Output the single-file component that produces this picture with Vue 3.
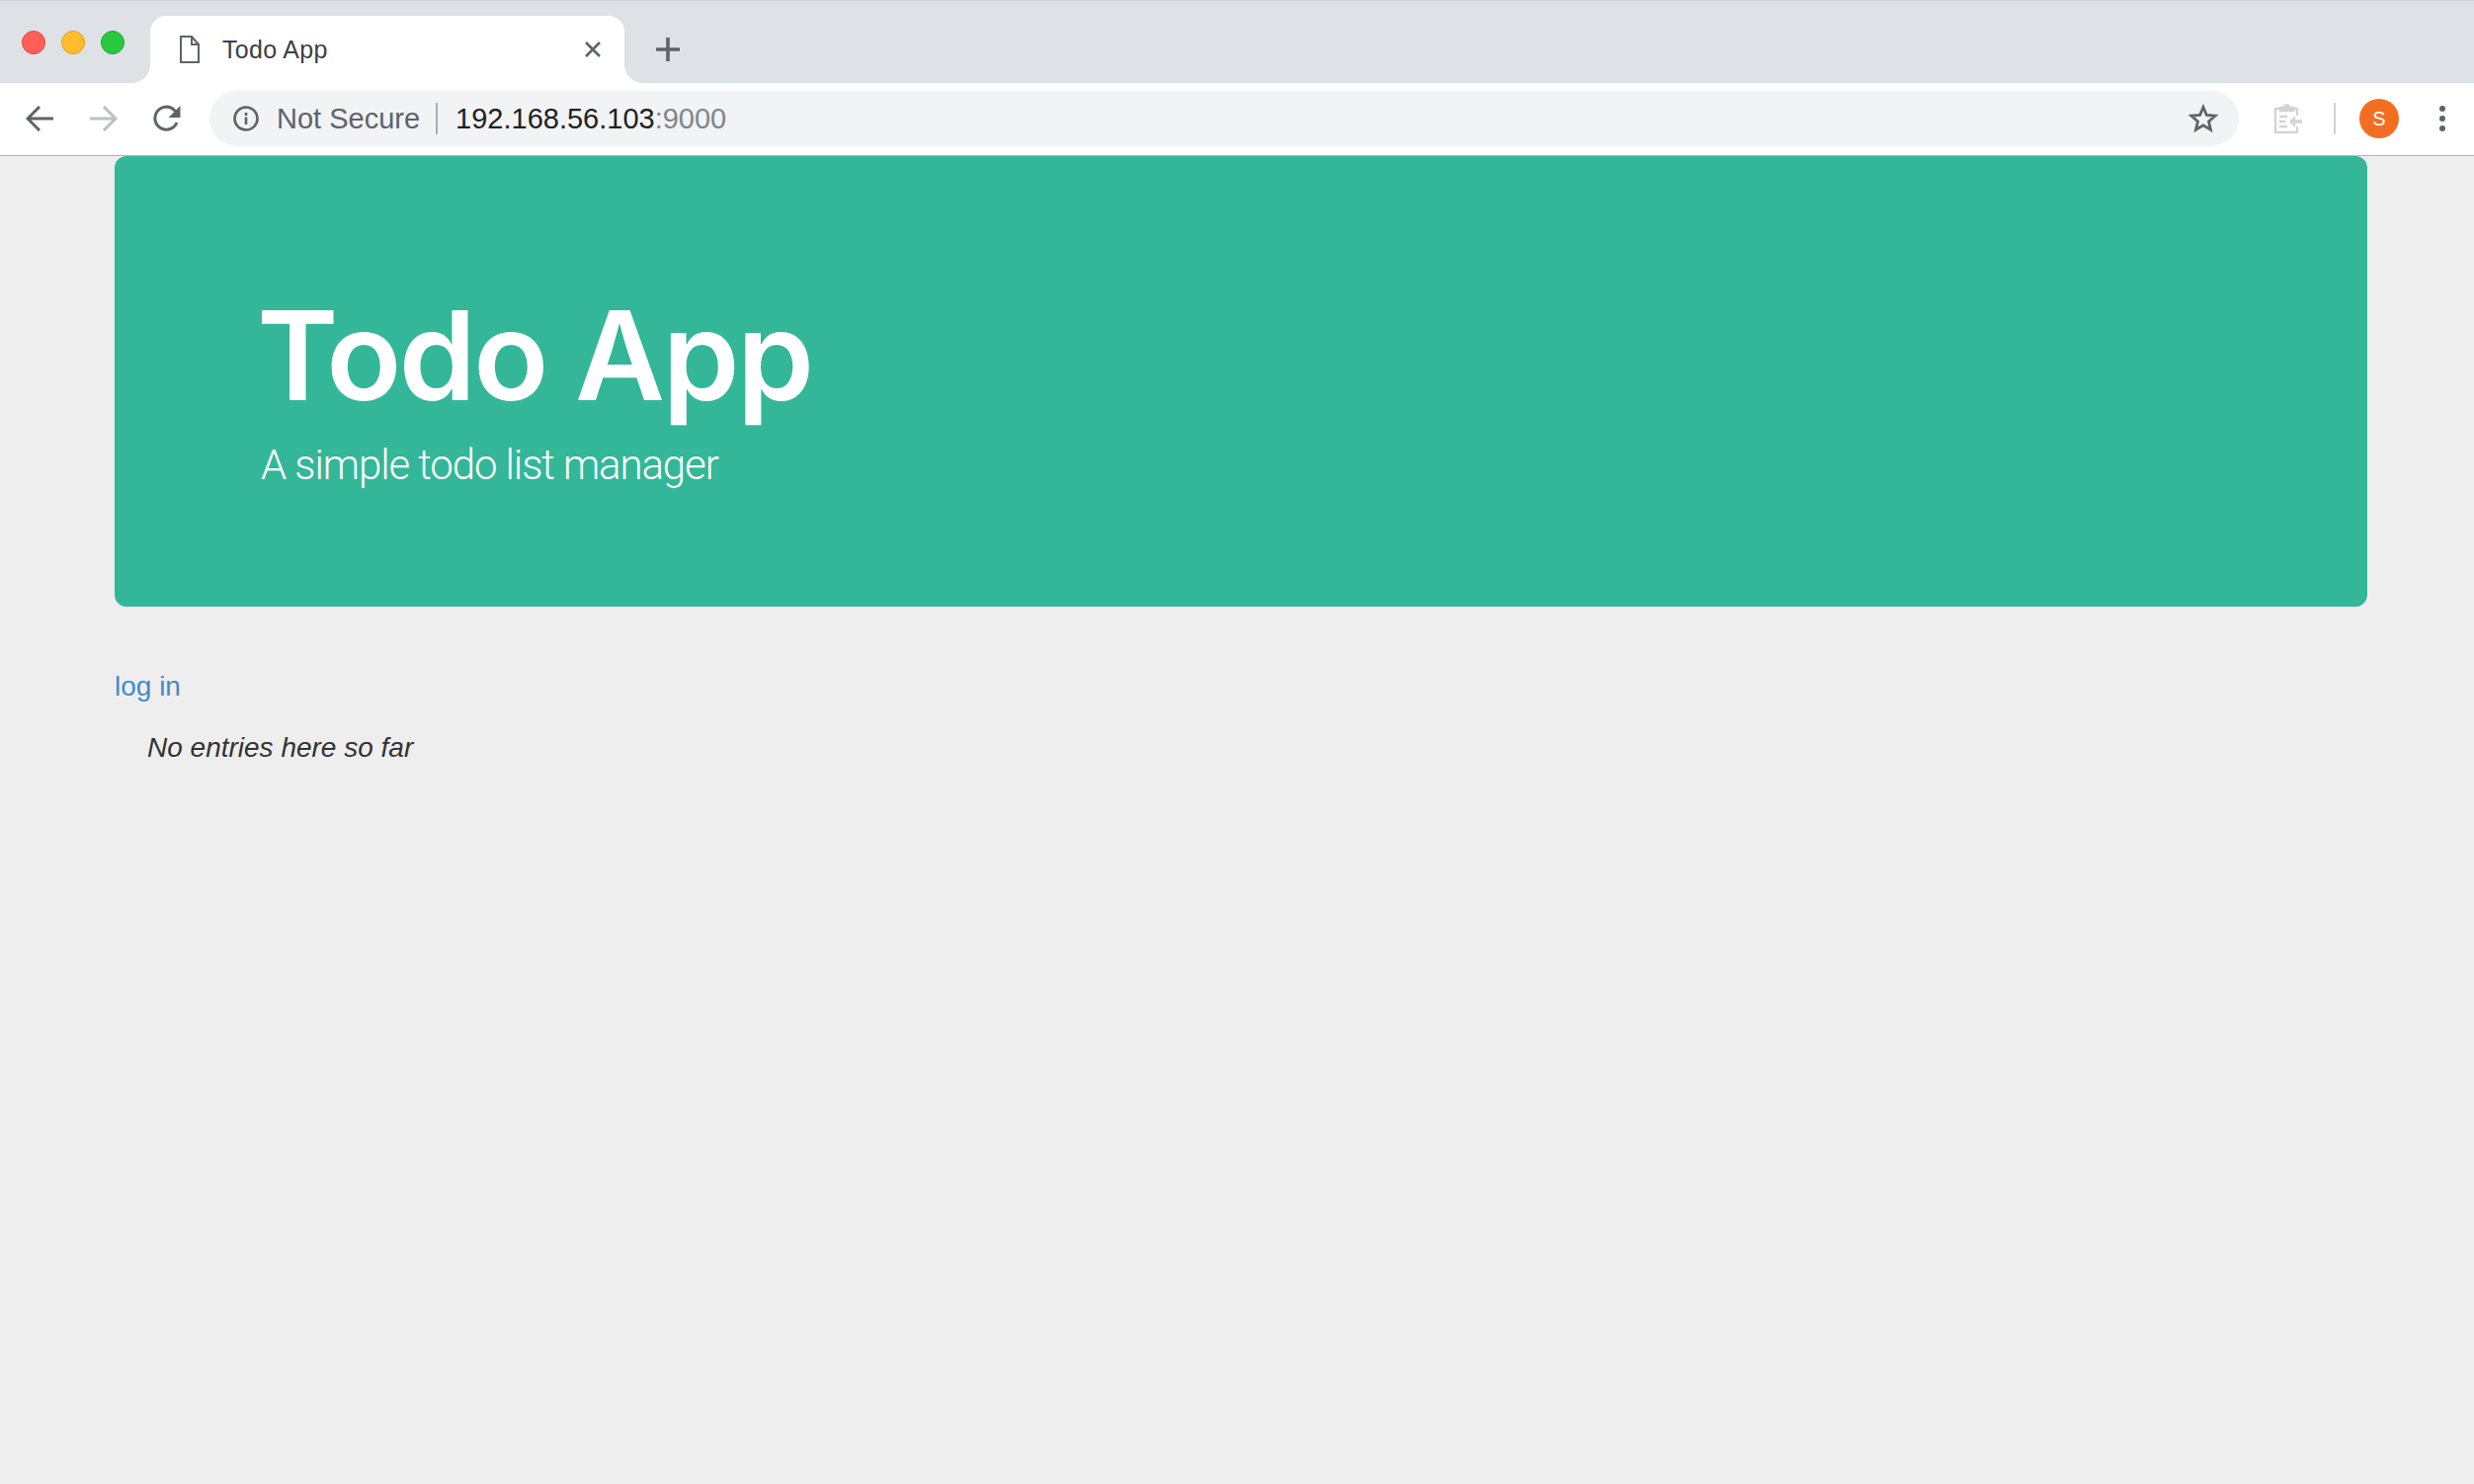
<template>
  <div class="window">
    <!-- tab strip -->
    <div class="tabstrip">
      <div class="lights">
        <span class="light red"></span>
        <span class="light yellow"></span>
        <span class="light green"></span>
      </div>
      <div class="tab">
        <svg class="doc" width="20" height="28" viewBox="0 0 20 28" fill="none" stroke="#5f6368" stroke-width="2">
          <path d="M1 1h11l7 8v18H1z" />
          <path d="M12 1v8h7" />
        </svg>
        <span class="tab-title">Todo App</span>
        <svg class="close" width="18" height="16" viewBox="0 0 18 16" stroke="#5f6368" stroke-width="2.6" fill="none">
          <path d="M2 1l14 14M16 1L2 15" />
        </svg>
      </div>
      <svg class="plus" width="24" height="24" viewBox="0 0 24 24" stroke="#5f6368" stroke-width="3.6">
        <path d="M12 0v24M0 12h24" />
      </svg>
    </div>

    <!-- toolbar with address bar -->
    <div class="toolbar">
      <svg class="nav back" width="28" height="26" viewBox="0 0 28 26" fill="none" stroke="#5f6368" stroke-width="3">
        <path d="M28 13H3M14 1L2 13l12 12" />
      </svg>
      <svg class="nav forward" width="28" height="26" viewBox="0 0 28 26" fill="none" stroke="#bdbfc2" stroke-width="3">
        <path d="M0 13h25M14 1l12 12-12 12" />
      </svg>
      <svg class="nav reload" width="28" height="28" viewBox="0 0 28 28" fill="none">
        <path d="M24 18A11.500 11.500 0 1 1 21.500 5.500L24 8" stroke="#5f6368" stroke-width="3" />
        <path d="M27.500 1v12h-12z" fill="#5f6368" />
      </svg>
      <div class="omnibox">
        <svg class="info" width="26" height="26" viewBox="0 0 26 26" fill="none" stroke="#5f6368" stroke-width="2.6">
          <circle cx="13" cy="13" r="11.5" />
          <path d="M13 11.5V19M13 7v3" />
        </svg>
        <span class="secure">Not Secure</span>
        <span class="omni-sep"></span>
        <span class="url">192.168.56.103<span class="port">:9000</span></span>
        <svg class="star" width="30" height="30" viewBox="0 0 30 30" fill="none" stroke="#5f6368" stroke-width="2.8" stroke-linejoin="miter">
          <path d="M15 3.500l3.400 8 8.600.7-6.500 5.700 2 8.400-7.500-4.500-7.500 4.500 2-8.400L3 12.200l8.600-.7z" />
        </svg>
      </div>
      <svg class="clip" width="30" height="30" viewBox="0 0 30 30" fill="none" stroke="#d2d3d4" stroke-width="2.4">
        <path d="M24 12V5h-5M7 5H2v24h22v-6" />
        <path d="M7 7V4h4a2.500 2.500 0 0 1 5 0h4v3z" fill="#d2d3d4" />
        <path d="M6 13h8M6 18h6M6 23h8" />
        <path d="M29 18H17" stroke-width="3.600" />
        <path d="M22 12l-6 6 6 6z" fill="#d2d3d4" stroke="none" />
      </svg>
      <span class="tool-sep"></span>
      <span class="avatar">S</span>
      <div class="kebab">
        <span></span>
        <span></span>
        <span></span>
      </div>
    </div>

    <!-- page content -->
    <main class="page">
      <header class="jumbotron">
        <h1>Todo App</h1>
        <p>A simple todo list manager</p>
      </header>
      <a class="login" href="#">log in</a>
      <em class="empty">No entries here so far</em>
    </main>
  </div>
</template>

<script setup>
</script>

<style>
html,
body {
  margin: 0;
  background: #eeeeee;
}
</style>

<style scoped>
.window {
  width: 2504px;
  height: 1502px;
  display: flex;
  flex-direction: column;
  overflow: hidden;
  background: #eeeeee;
  font-family: "Liberation Sans", Arial, sans-serif;
}

/* tab strip */
.tabstrip {
  height: 84px;
  box-sizing: border-box;
  flex: none;
  display: flex;
  align-items: flex-end;
  background: #dee1e6;
  border-top: 1px solid #cfd1d4;
}
.lights {
  width: 152px;
  height: 83px;
  box-sizing: border-box;
  flex: none;
  display: flex;
  gap: 16px;
  padding: 30px 0 0 22px;
}
.light {
  width: 24px;
  height: 24px;
  box-sizing: border-box;
  border-radius: 50%;
}
.red {
  background: #ff5f57;
  border: 1px solid #e2463f;
}
.yellow {
  background: #ffbd2e;
  border: 1px solid #e1a116;
}
.green {
  background: #28c940;
  border: 1px solid #14ae2a;
}
.tab {
  position: relative;
  width: 480px;
  height: 68px;
  box-sizing: border-box;
  flex: none;
  display: flex;
  align-items: center;
  padding: 0 23px 0 30px;
  background: #ffffff;
  border-radius: 16px 16px 0 0;
}
/* curved feet of the active tab */
.tab::before,
.tab::after {
  content: "";
  position: absolute;
  bottom: 0;
  width: 18px;
  height: 18px;
}
.tab::before {
  left: -18px;
  background: radial-gradient(circle at 0 0, transparent 17.5px, #ffffff 18px);
}
.tab::after {
  right: -18px;
  background: radial-gradient(circle at 100% 0, transparent 17.5px, #ffffff 18px);
}
.tab-title {
  flex: 1;
  margin-left: 23px;
  font-size: 25px;
  letter-spacing: 0.3px;
  color: #3c4043;
}
.plus {
  flex: none;
  margin: 0 0 22px 32px;
}

/* toolbar */
.toolbar {
  height: 74px;
  box-sizing: border-box;
  flex: none;
  display: flex;
  align-items: center;
  padding-bottom: 1px;
  background: #ffffff;
  border-bottom: 1px solid #b6b6b6;
}
.nav {
  flex: none;
}
.back {
  margin-left: 26px;
}
.forward {
  margin-left: 37px;
}
.reload {
  margin-left: 36px;
}
.omnibox {
  width: 2054px;
  height: 56px;
  box-sizing: border-box;
  flex: none;
  display: flex;
  align-items: center;
  margin-left: 29px;
  padding: 0 21px 0 24px;
  border-radius: 28px;
  background: #f1f3f4;
  font-size: 29px;
}
.secure {
  margin-left: 18px;
  color: #5f6368;
}
.omni-sep {
  width: 2px;
  height: 32px;
  margin: 0 18px 0 16px;
  background: #a9abad;
}
.url {
  flex: 1;
  color: #202124;
}
.port {
  color: #80868b;
}
.info,
.star,
.clip {
  flex: none;
}
.clip {
  margin-left: 35px;
}
.tool-sep {
  width: 2px;
  height: 32px;
  flex: none;
  margin-left: 31px;
  background: #d0d0d0;
}
.avatar {
  width: 40px;
  height: 40px;
  flex: none;
  display: flex;
  align-items: center;
  justify-content: center;
  margin-left: 24px;
  border-radius: 50%;
  background: #f26f21;
  color: #ffffff;
  font-size: 20px;
}
.kebab {
  flex: none;
  display: flex;
  flex-direction: column;
  gap: 4px;
  margin-left: 41px;
}
.kebab span {
  width: 6px;
  height: 6px;
  border-radius: 50%;
  background: #5f6368;
}

/* page */
.page {
  flex: 1;
  padding: 0 108px 0 116px;
}
.jumbotron {
  height: 456px;
  box-sizing: border-box;
  padding: 132px 0 0 148px;
  border-radius: 12px;
  background: #33b798;
  color: #ffffff;
}
.jumbotron h1 {
  margin: 0 0 0 -4px;
  font-family: Inter, "Liberation Sans", sans-serif;
  font-size: 125px;
  font-weight: 600;
  line-height: 139px;
  letter-spacing: -2.5px;
}
.jumbotron p {
  margin: 12px 0 0;
  font-family: Roboto, "Liberation Sans", sans-serif;
  font-size: 42px;
  font-weight: 300;
  line-height: 60px;
  letter-spacing: -1.1px;
}
.login {
  display: block;
  width: fit-content;
  margin-top: 61px;
  font-size: 28px;
  line-height: 40px;
  color: #428bca;
  text-decoration: none;
}
.empty {
  display: block;
  margin: 22px 0 0 33px;
  font-size: 28px;
  line-height: 40px;
  color: #333333;
}
</style>
